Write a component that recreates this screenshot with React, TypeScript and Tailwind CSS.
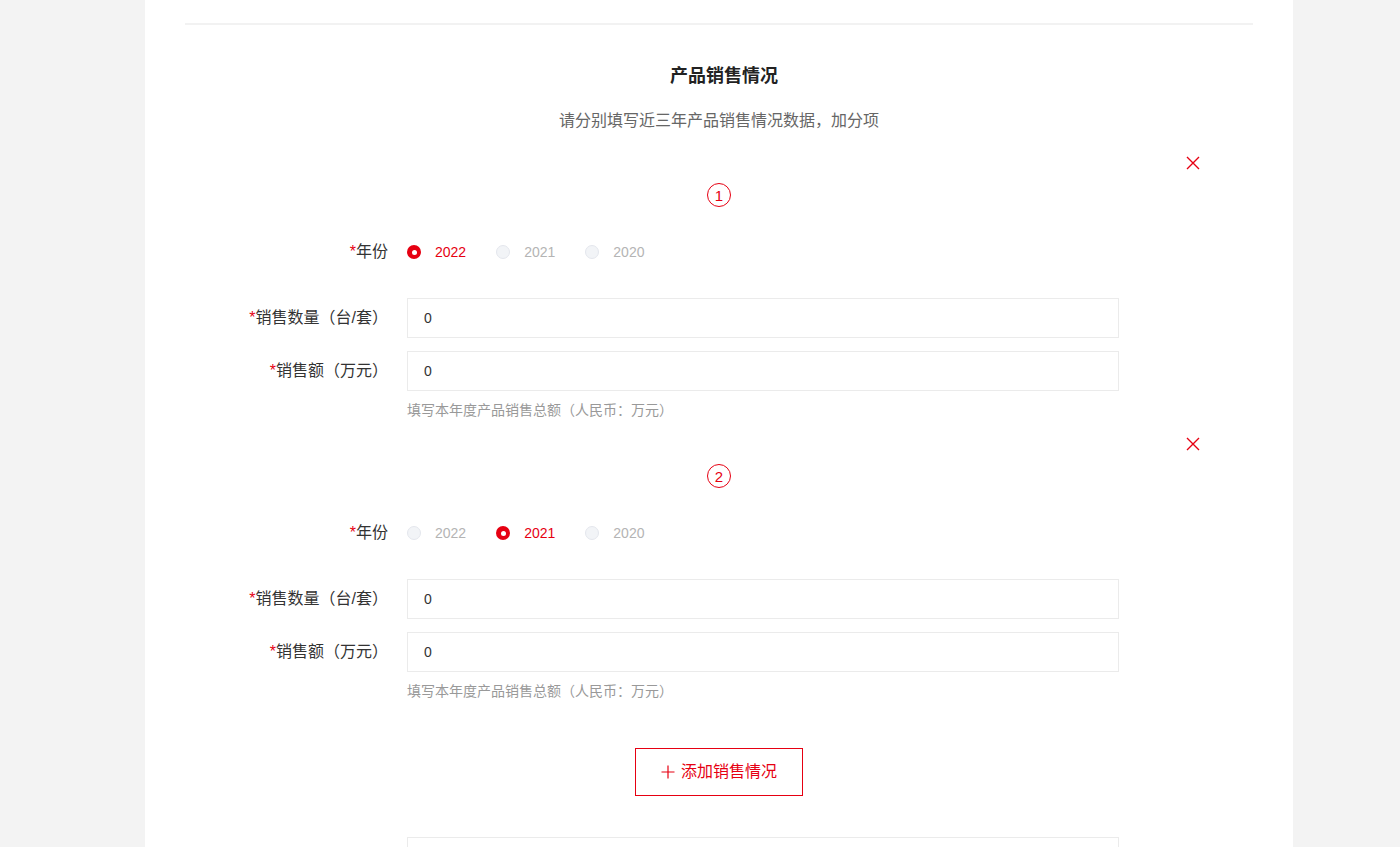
import { useState } from "react";

const RED = "#e60012";
const YEARS = ["2022", "2021", "2020"];

type Sale = { year: string; count: string; amount: string };

function CloseIcon() {
  return (
    <svg width="14" height="14" viewBox="0 0 14 14" aria-hidden="true">
      <path d="M1 1 L13 13 M13 1 L1 13" stroke={RED} strokeWidth="1.4" fill="none" />
    </svg>
  );
}

function PlusIcon() {
  return (
    <svg width="14" height="14" viewBox="0 0 14 14" aria-hidden="true">
      <path d="M7 0.5 V13.5 M0.5 7 H13.5" stroke={RED} strokeWidth="1.2" fill="none" />
    </svg>
  );
}

function Label({ text }: { text: string }) {
  return (
    <div className="w-[203px] shrink-0 text-right text-[16px] text-[#333]">
      <span className="text-[#e60012]">*</span>
      {text}
    </div>
  );
}

function SaleBlock({
  index,
  sale,
  onChange,
}: {
  index: number;
  sale: Sale;
  onChange: (next: Sale) => void;
}) {
  return (
    <div>
      <div className="flex h-[14px] justify-end pr-[53px]">
        <button type="button" className="cursor-pointer">
          <CloseIcon />
        </button>
      </div>

      <div className="mt-[13px] flex justify-center">
        <span className="flex h-[24px] w-[24px] items-center justify-center rounded-full border border-[#e60012] text-[15px] leading-none text-[#e60012]">
          {index}
        </span>
      </div>

      <div className="mt-[25px] flex h-[40px] items-center">
        <Label text="年份" />
        <div className="ml-[19px] flex items-center">
          {YEARS.map((year) => {
            const checked = sale.year === year;
            return (
              <label
                key={year}
                className="mr-[30px] flex cursor-pointer items-center"
                onClick={() => onChange({ ...sale, year })}
              >
                {checked ? (
                  <span className="flex h-[14px] w-[14px] items-center justify-center rounded-full bg-[#e60012]">
                    <span className="h-[5px] w-[5px] rounded-full bg-white" />
                  </span>
                ) : (
                  <span className="h-[14px] w-[14px] rounded-full border border-[#e4e7ed] bg-[#f2f4f7]" />
                )}
                <span
                  className={
                    checked
                      ? "ml-[14px] text-[14px] text-[#e60012]"
                      : "ml-[14px] text-[14px] text-[#b4b4b4]"
                  }
                >
                  {year}
                </span>
              </label>
            );
          })}
        </div>
      </div>

      <div className="mt-[26px] flex items-center">
        <Label text="销售数量（台/套）" />
        <input
          value={sale.count}
          onChange={(event) => onChange({ ...sale, count: event.target.value })}
          className="ml-[19px] h-[40px] w-[712px] border border-[#ebebeb] px-[16px] text-[14px] text-[#333] outline-none"
        />
      </div>

      <div className="mt-[13px] flex items-center">
        <Label text="销售额（万元）" />
        <input
          value={sale.amount}
          onChange={(event) => onChange({ ...sale, amount: event.target.value })}
          className="ml-[19px] h-[40px] w-[712px] border border-[#ebebeb] px-[16px] text-[14px] text-[#333] outline-none"
        />
      </div>

      <p className="ml-[222px] mt-[9px] text-[14px] leading-[20px] text-[#999]">
        填写本年度产品销售总额（人民币：万元）
      </p>
    </div>
  );
}

export default function App() {
  const [sales, setSales] = useState<Sale[]>([
    { year: "2022", count: "0", amount: "0" },
    { year: "2021", count: "0", amount: "0" },
  ]);

  function update(i: number, next: Sale) {
    setSales((prev) => prev.map((s, idx) => (idx === i ? next : s)));
  }

  return (
    <div
      className="min-h-[847px] bg-[#f3f3f3]"
      style={{ fontFamily: '"Liberation Sans", "Noto Sans CJK SC", sans-serif' }}
    >
      <div className="ml-[145px] h-[847px] w-[1148px] overflow-hidden bg-white px-[40px] pt-[23px]">
        <div className="h-[2px] bg-[#f2f2f2]" />

        <h2 className="mt-[39px] pl-[10px] text-center text-[18px] font-bold leading-[24px] text-[#222]">
          产品销售情况
        </h2>
        <p className="mt-[21px] text-center text-[16px] leading-[24px] text-[#666]">
          请分别填写近三年产品销售情况数据，加分项
        </p>

        <div className="mt-[23px]">
          {sales.map((sale, i) => (
            <div key={i} className={i > 0 ? "mt-[17px]" : ""}>
              <SaleBlock index={i + 1} sale={sale} onChange={(next) => update(i, next)} />
            </div>
          ))}
        </div>

        <div className="mt-[47px] flex justify-center">
          <button
            type="button"
            onClick={() =>
              setSales((prev) => [...prev, { year: "2020", count: "0", amount: "0" }])
            }
            className="flex h-[48px] w-[168px] items-center justify-center gap-[6px] border border-[#e60012] text-[16px] text-[#e60012]"
          >
            <PlusIcon />
            添加销售情况
          </button>
        </div>

        <div className="ml-[222px] mt-[41px] h-[40px] w-[712px] border border-[#ebebeb]" />
      </div>
    </div>
  );
}
